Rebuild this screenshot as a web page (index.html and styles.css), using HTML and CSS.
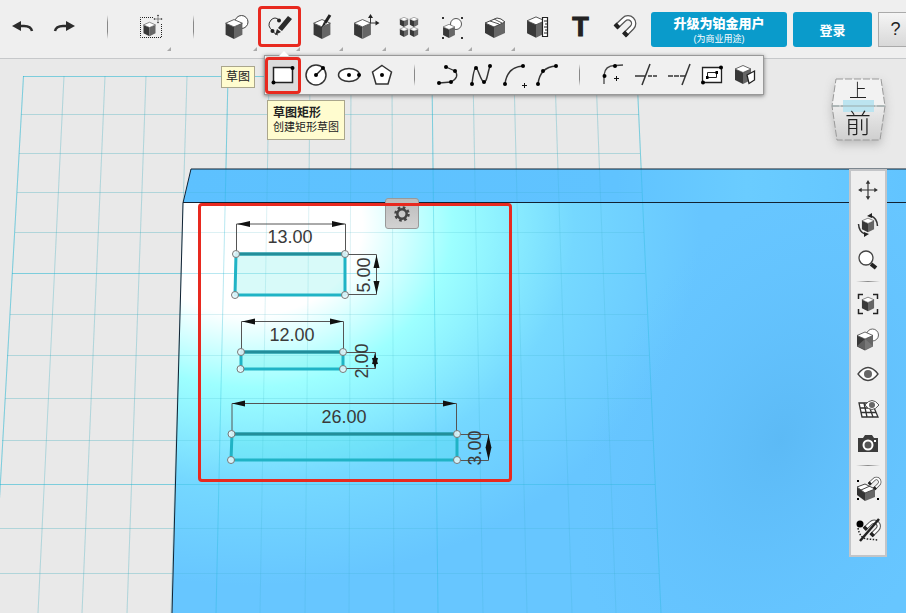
FILE: index.html
```html
<!DOCTYPE html>
<html lang="zh-CN">
<head>
<meta charset="utf-8">
<meta name="viewport" content="width=device-width, initial-scale=1">
<title>草图</title>
<link rel="stylesheet" href="styles.css">
</head>
<body>
<svg class="defs" aria-hidden="true">
  <defs>
    <g id="cube">
      <path d="M-8-5.500 0-2V9.500L-8 5.500Z" fill="#383838"/>
      <path d="M8-5.500 0-2V9.500L8 5.500Z" fill="#666"/>
      <path d="M0-9 8-5.500 0-2-8-5.500Z" fill="#fff" stroke="#444" stroke-width=".8"/>
    </g>
    <g id="move">
      <path d="M0-9V9M-9 0H9" stroke="#333" stroke-width="1.300"/>
      <path d="M0-11l2.500 4h-5zM0 11l2.500-4h-5zM-11 0l4-2.500v5zM11 0l-4-2.500v5z" fill="#333"/>
    </g>
    <g id="magnet">
      <path d="M-8 0 0-7.500A5.600 5.600 0 0 1 8 .5L.5 8" fill="none" stroke="#555" stroke-width="5.500"/>
      <path d="M-8 0 0-7.500A5.600 5.600 0 0 1 8 .5L.5 8" fill="none" stroke="#fff" stroke-width="3"/>
      <path d="M-8.500 .5-5.500-2.500M0 8.500 3 5.500" stroke="#222" stroke-width="5.500"/>
    </g>
    <g id="pencil"><path d="M9-11 13-8 3 4-1 1ZM-2 2 2 5-4 8Z" fill="#2c2c2c"/></g>
  </defs>
</svg>

<header class="topbar">
  <nav class="tools" aria-label="工具">
    <button class="tool" aria-label="撤销"><svg viewBox="-15 -15 30 30"><path d="M-10-1-1-6V4Z" fill="#2c2c2c"/><path d="M-3-1H2Q9-1 10 4" fill="none" stroke="#2c2c2c" stroke-width="2.500"/></svg></button>
    <button class="tool" aria-label="重做"><svg viewBox="-15 -15 30 30"><path d="M10-1 1-6V4Z" fill="#2c2c2c"/><path d="M3-1H-2Q-9-1-10 4" fill="none" stroke="#2c2c2c" stroke-width="2.500"/></svg></button>
    <span class="divider"></span>
    <button class="tool more" aria-label="变换"><svg viewBox="-15 -15 30 30"><path d="M2-9.500H-10.500V10.500H10.500V-4" fill="none" stroke="#222" stroke-dasharray="1 1"/><use href="#cube" transform="translate(-1.500 2)scale(.75)"/><use href="#move" transform="translate(7 -8)scale(.42)"/></svg></button>
    <span class="divider"></span>
    <button class="tool more" aria-label="基本体"><svg viewBox="-15 -15 30 30"><circle cx="4.500" cy="-5" r="6.500" fill="#fff" stroke="#444"/><use href="#cube" transform="translate(-3 2)scale(1.050)"/></svg></button>
    <button class="tool more marked" aria-label="草图"><svg viewBox="-15 -15 30 30"><path d="M-1-7Q-5-11-9-7-14-1-7 4-6 7-2 8" fill="none" stroke="#333"/><circle cx="-1" cy="-6.500" r="2" fill="#222"/><circle cx="-7.500" cy="4" r="2" fill="#222"/><use href="#pencil" transform="translate(-1 0)"/></svg></button>
    <button class="tool more" aria-label="构造"><svg viewBox="-15 -15 30 30"><use href="#cube" transform="translate(-1 2)scale(1.050)"/><path d="M7-12 2-4" stroke="#222" stroke-width="3"/><path d="M1-5 3-3-2 1Z" fill="#222"/></svg></button>
    <button class="tool more" aria-label="修改"><svg viewBox="-15 -15 30 30"><use href="#cube" transform="translate(-3.500 2)scale(1.050)"/><path d="M4.500-10V-4H11" fill="none" stroke="#333"/><path d="M4.500-13l2.500 4H2zM13.500-4l-4-2.500v5z" fill="#222"/></svg></button>
    <button class="tool more" aria-label="阵列"><svg viewBox="-15 -15 30 30"><use href="#cube" transform="translate(-5 -5)scale(.52)"/><use href="#cube" transform="translate(5 -5)scale(.52)"/><use href="#cube" transform="translate(-5 5)scale(.52)"/><use href="#cube" transform="translate(5 5)scale(.52)"/></svg></button>
    <button class="tool more" aria-label="分组"><svg viewBox="-15 -15 30 30"><path d="M-10-10h2v2h-2zM9-10h2v2H9zM-10 10h2v2h-2zM9 10h2v2H9z" fill="#333"/><circle cx="4" cy="-3" r="5.500" fill="#fff" stroke="#555"/><use href="#cube" transform="translate(-3 4)scale(.74)"/></svg></button>
    <button class="tool more" aria-label="合并"><svg viewBox="-15 -15 30 30"><path d="M-10-4-1 0V11L-10 6Z" fill="#383838"/><path d="M10-5-1 0V11L10 6Z" fill="#666"/><path d="M-10-4 2-9 6-8 10-5-1 0Z" fill="#fff" stroke="#444"/><path d="M-5-6 4-3M-1-8 7-4" stroke="#555"/></svg></button>
    <button class="tool" aria-label="测量"><svg viewBox="-15 -15 30 30"><use href="#cube" transform="translate(-2 0)scale(1.120)"/><path d="M4.500-9.500h5v19h-5z" fill="#fff" stroke="#222" stroke-width="1.200"/><path d="M6-6h3M7-3h2M6 0h3M7 3h2M6 6h3" stroke="#222"/></svg></button>
    <button class="tool" aria-label="文本"><span class="type-mark">T</span></button>
    <button class="tool" aria-label="吸附"><svg viewBox="-15 -15 30 30"><use href="#magnet"/></svg></button>
  </nav>
  <div class="account">
    <button class="primary upgrade"><strong>升级为铂金用户</strong><small>(为商业用途)</small></button>
    <button class="primary login">登录</button>
    <button class="help" aria-label="帮助">?</button>
  </div>
</header>

<main class="stage">
  <svg class="scene" viewBox="0 59 906 554" preserveAspectRatio="xMinYMin slice" role="img" aria-label="草图画布">
    <defs>
      <radialGradient id="shine" gradientUnits="userSpaceOnUse" cx="0" cy="0" r="450" gradientTransform="translate(250 225)scale(1 .8)">
        <stop offset="0" stop-color="#fff"/><stop offset=".25" stop-color="#fff"/><stop offset=".45" stop-color="#9dffff"/><stop offset=".54" stop-color="#90f3ff"/><stop offset=".72" stop-color="#75d8ff"/><stop offset="1" stop-color="#67c6ff"/>
      </radialGradient>
      <radialGradient id="shade" gradientUnits="userSpaceOnUse" cx="0" cy="0" r="230" gradientTransform="translate(780 440)rotate(25)scale(.8 1.200)">
        <stop offset="0" stop-color="#55b2ef" stop-opacity=".6"/><stop offset="1" stop-color="#60beff" stop-opacity="0"/>
      </radialGradient>
      <linearGradient id="back" x1="0" x2="1"><stop offset="0" stop-color="#5dc1ff"/><stop offset=".6" stop-color="#60c3ff"/><stop offset=".78" stop-color="#6accff"/><stop offset="1" stop-color="#62c4ff"/></linearGradient>
      <g id="grid">
        <path d="M64 76 38 613M105 76 82 613M146 76 127 613M187 76 171 613M269 76 260 613M310 76 305 613M351 76 349 613M392 76 394 613M473 76 483 613M514 76 527 613M555 76 572 613M596 76 616 613M21 114.500H639M19 153.500H640M17 192.500H642M15 232.500H644M10 314.500H647M7 355.500H649M5 398.500H651M2 440.500H653M0 528.500H657M0 573.500H659"/>
        <path class="major" d="M23.500 76-7 613M228 76 216 613M432 76 438 613M637 76 661 613M23 76.500H637M12 273.500H645M0 484.500H655"/>
      </g>
    </defs>
    <use class="grid" href="#grid"/>
    <path d="M191 169H906V203H183Z" fill="url(#back)"/>
    <path d="M183 203H906V613H172Z" fill="url(#shine)"/>
    <path d="M183 203H906V613H172Z" fill="url(#shade)"/>
    <use class="grid" href="#grid"/>
    <path d="M172 613 183 203 191 169H906M183 202.500H906" fill="none" stroke="#123"/>

    <g class="extension">
      <path d="M236.500 254V224H345.500V254M345 254.500H376.500V294.500H345"/>
      <path d="M241.500 352V321.500H343.500V352M343 352.500H375.500V368.500H343"/>
      <path d="M232 434V403.500H456.500V434M456 434.500H488.500V460.500H457"/>
    </g>
    <path d="M237 224l13-3v6zM345 224l-13-3v6zM242 321.500l13-3v6zM343 321.500l-13-3v6zM232 403.500l13-3v6zM456 403.500l-13-3v6zM376.500 255l3 13h-6zM376.500 294l3-13h-6zM375 353l3 11h-6zM375 369l-3-11h6zM488.500 435l3 13h-6zM488.500 460l-3-13h6z" fill="#111"/>
    <g class="profile">
      <path d="M236 254H345V295H235Z"/><path d="M241 352H343V369H241Z"/><path d="M232 434H457V460H231Z"/>
    </g>
    <path d="M236 254H345M241 352H343M232 434H457" stroke="#238e9a" stroke-width="3"/>
    <g class="nodes">
      <circle cx="236" cy="254" r="3.500"/><circle cx="345" cy="254" r="3.500"/><circle cx="235" cy="295" r="3.500"/><circle cx="345" cy="295" r="3.500"/>
      <circle cx="241" cy="352" r="3.500"/><circle cx="343" cy="352" r="3.500"/><circle cx="240.500" cy="369" r="3.500"/><circle cx="343" cy="369" r="3.500"/>
      <circle cx="231.500" cy="434" r="3.500"/><circle cx="457" cy="434" r="3.500"/><circle cx="231" cy="460" r="3.500"/><circle cx="457" cy="460" r="3.500"/>
    </g>
    <g class="dimension">
      <text x="290" y="243">13.00</text><text x="292" y="341">12.00</text><text x="344" y="423">26.00</text>
      <text transform="translate(370 275)rotate(-90)">5.00</text><text transform="translate(368 361)rotate(-90)">2.00</text><text transform="translate(481 448)rotate(-90)">3.00</text>
    </g>
  </svg>

  <button class="gear" aria-label="设置"><svg viewBox="-10 -10 20 20"><circle r="6.500" fill="none" stroke="#444" stroke-width="2.500" stroke-dasharray="2.600 2.500"/><circle r="4.700" fill="none" stroke="#444" stroke-width="2.500"/></svg></button>
  <div class="callout"></div>

  <div class="flyout" role="toolbar" aria-label="草图工具">
    <button class="sub marked" aria-label="草图矩形"><svg viewBox="-15 -15 30 30"><path d="M-9.500-7.500H9.500V7.500H-9.500Z" fill="#fff" stroke="#222" stroke-width="1.500"/><circle cx="9.500" cy="-7" r="2"/><circle cx="-9.500" cy="7.500" r="2"/></svg></button>
    <button class="sub" aria-label="圆"><svg viewBox="-15 -15 30 30"><circle r="10" fill="#fff" stroke="#333" stroke-width="1.500"/><path d="M0 0 7-7" stroke="#222" stroke-width="1.500"/><circle r="2"/><circle cx="7" cy="-7" r="2"/></svg></button>
    <button class="sub" aria-label="椭圆"><svg viewBox="-15 -15 30 30"><ellipse rx="10.500" ry="6.500" fill="#fff" stroke="#333" stroke-width="1.500"/><circle r="2"/><circle cx="10" r="2"/></svg></button>
    <button class="sub" aria-label="多边形"><svg viewBox="-15 -15 30 30"><path d="M0-9.500 9.500-3 6 9H-6L-9.500-3Z" fill="#fff" stroke="#333" stroke-width="1.500"/><circle r="2"/></svg></button>
    <span class="divider"></span>
    <button class="sub" aria-label="多段线"><svg viewBox="-15 -15 30 30"><path d="M-2-8 7-4Q12 2 3 7L-9 8" fill="none" stroke="#333" stroke-width="1.300"/><circle cx="-2" cy="-8" r="2"/><circle cx="7" cy="-4" r="2"/><circle cx="3" cy="7" r="2"/><circle cx="-9" cy="8" r="2"/></svg></button>
    <button class="sub" aria-label="样条"><svg viewBox="-15 -15 30 30"><path d="M-9 9C-8 0-7-7-5-7S0 7 3 7 6 0 9-9" fill="none" stroke="#333" stroke-width="1.500"/><circle cx="-9" cy="9" r="2"/><circle cx="-5" cy="-7" r="2"/><circle cx="3" cy="7" r="2"/><circle cx="9" cy="-9" r="2"/></svg></button>
    <button class="sub" aria-label="两点圆弧"><svg viewBox="-15 -15 30 30"><path d="M-9 9Q-7-8 9-9" fill="none" stroke="#333" stroke-width="1.500"/><circle cx="-9" cy="9" r="2"/><circle cx="9" cy="-9" r="2"/><path d="M8 10.500h5M10.500 8v5" stroke="#111"/></svg></button>
    <button class="sub" aria-label="三点圆弧"><svg viewBox="-15 -15 30 30"><path d="M-9 9Q-7-8 9-9" fill="none" stroke="#333" stroke-width="1.500"/><circle cx="-9" cy="9" r="2"/><circle cx="-4" cy="-4" r="2"/><circle cx="9" cy="-9" r="2"/></svg></button>
    <span class="divider"></span>
    <button class="sub" aria-label="圆角"><svg viewBox="-15 -15 30 30"><path d="M-9 9V0Q-8-10 3-9.500L10-10" fill="none" stroke="#444" stroke-width="1.300"/><circle cx="-8.500" cy="1" r="2"/><circle cx="2" cy="-9" r="2"/><path d="M1 3.500h5M3.500 1v5" stroke="#111"/></svg></button>
    <button class="sub" aria-label="修剪"><svg viewBox="-15 -15 30 30"><path d="M-11 1H0M4-11-4 10" stroke="#333" stroke-width="1.500"/><path d="M2 1H12" stroke="#333" stroke-width="1.500" stroke-dasharray="4 1"/></svg></button>
    <button class="sub" aria-label="延伸"><svg viewBox="-15 -15 30 30"><path d="M-11 1H6" stroke="#333" stroke-width="1.500" stroke-dasharray="5 1"/><path d="M11-11 3 10" stroke="#333" stroke-width="1.500"/></svg></button>
    <button class="sub" aria-label="偏移"><svg viewBox="-15 -15 30 30"><path d="M-9.500-7.500H9.500V7.500H-9.500Z" fill="#fff" stroke="#222" stroke-width="1.300"/><path d="M-4.500-2.500H4.500V2.500H-4.500Z" fill="none" stroke="#222"/><path d="M3.500-4h2.500v3H3.500zM-6 1h2.500v3H-6z"/><circle cx="9" cy="-7.500" r="2"/><circle cx="-9" cy="7.500" r="2"/></svg></button>
    <button class="sub" aria-label="投影"><svg viewBox="-15 -15 30 30"><use href="#cube" transform="translate(-2 -.5)"/><path d="M2 0 9.500-4V5L4 8.500Z" fill="#fff" stroke="#222" stroke-width="1.300"/></svg></button>
  </div>
  <div class="tip tip-name" role="tooltip">草图</div>
  <div class="tip tip-detail" role="tooltip"><strong>草图矩形</strong><span>创建矩形草图</span></div>

  <div class="viewcube" role="img" aria-label="视图立方体">
    <svg viewBox="0 0 58 70">
      <defs><linearGradient id="face" x2="0" y2="1"><stop offset="0" stop-color="#ececec"/><stop offset="1" stop-color="#cfcfcf"/></linearGradient></defs>
      <path d="M6 3H51L55 30H2Z" fill="#f2f2f2"/><path d="M2 30H55L50 64H7Z" fill="url(#face)"/>
      <path d="M6 3H51L55 30 50 64H7L2 30ZM2 30H55" fill="none" stroke="#999" stroke-dasharray="7 2"/>
      <path d="M13 24H44V36H13Z" fill="#bce4f0"/><path d="M2 30H55" stroke="#9aa"/>
      <text x="28" y="21" font-size="18">上</text><text x="28" y="57" font-size="26">前</text>
    </svg>
  </div>

  <aside class="viewbar" role="toolbar" aria-label="视图">
    <button class="view" aria-label="平移"><svg viewBox="-15 -15 30 30"><use href="#move" transform="scale(.9)"/></svg></button>
    <button class="view" aria-label="旋转"><svg viewBox="-15 -15 30 30"><use href="#cube" transform="scale(.76)"/><path d="M3-9Q9-7 9.500 1M-3 9Q-9 7-9.500-1" fill="none" stroke="#333" stroke-width="1.500"/><path d="M-1-9 4-12V-7ZM1 9-4 7V12Z" fill="#222"/></svg></button>
    <button class="view" aria-label="缩放"><svg viewBox="-15 -15 30 30"><circle cx="-2" cy="-2" r="7" fill="#fff" stroke="#444" stroke-width="1.300"/><path d="M3 4 8 8" stroke="#222" stroke-width="4"/></svg></button>
    <span class="rule"></span>
    <button class="view" aria-label="适应"><svg viewBox="-15 -15 30 30"><use href="#cube" transform="scale(.76)"/><path d="M-9.500-5V-9.500H-5M5-9.500H9.500V-5M9.500 5V9.500H5M-5 9.500H-9.500V5" fill="none" stroke="#222" stroke-width="1.500"/></svg></button>
    <button class="view" aria-label="材质"><svg viewBox="-15 -15 30 30"><circle cx="4.500" cy="-4" r="6" fill="#fff" stroke="#666"/><use href="#cube" transform="translate(-3 2)"/><path d="M-3 0-11 7-3 11 5 7Z" fill="#888" opacity=".5"/></svg></button>
    <button class="view" aria-label="可见性"><svg viewBox="-15 -15 30 30"><path d="M-10 0Q0-13 10 0 0 13-10 0Z" fill="#fff" stroke="#444" stroke-width="1.300"/><circle r="4" fill="#666"/></svg></button>
    <button class="view" aria-label="网格"><svg viewBox="-15 -15 30 30"><path d="M-9-6H4L10 8H-6Z" fill="#fff" stroke="#333" stroke-width="1.300"/><path d="M-8-1H7M-7 3.500H8M-4-6-1 8M0-6 5 8" stroke="#333" stroke-width="1.300"/><path d="M-3-4Q4-13 11-4 4 5-3-4Z" fill="#fff" stroke="#555"/><circle cx="4" cy="-4" r="3" fill="#666"/></svg></button>
    <button class="view" aria-label="截图"><svg viewBox="-15 -15 30 30"><path d="M-10-6H-5L-3-9H4L6-6H10V8H-10Z" fill="#3c3c3c"/><circle cy="1" r="4.500" fill="#555" stroke="#fff" stroke-width="2"/><path d="M6-4h2v2H6z" fill="#fff"/></svg></button>
    <span class="rule"></span>
    <button class="view tall" aria-label="组合吸附"><svg viewBox="-15 -15 30 30"><path d="M-11-10h2v2h-2zM-11 8h2v2h-2zM9 8h2v2H9z"/><path d="M-11-3-3 3V11L-11 5Z" fill="#333"/><path d="M-3 3 7-1V7L-3 11Z" fill="#666"/><path d="M-11-3-3-6 7-1-3 3ZM-7 0 2-4" fill="#fff" stroke="#444"/><use href="#magnet" transform="translate(6 -6)scale(.6)"/></svg></button>
    <button class="view tall" aria-label="禁用吸附"><svg viewBox="-15 -15 30 30"><circle cx="-8" cy="-6" r="3.500"/><path d="M-10-2Q-8 9 0 9L10 10" fill="none" stroke="#222" stroke-width="1.500" stroke-dasharray="1.500 1.500"/><use href="#magnet" transform="translate(3 -1)scale(.8)"/><path d="M-8 11 11-11" stroke="#222" stroke-width="2.500"/></svg></button>
  </aside>
</main>
</body>
</html>
```
FILE: styles.css
```css
* { box-sizing: border-box; }

body {
  display: flex;
  flex-direction: column;
  min-height: 100vh;
  margin: 0;
  overflow: hidden;
  background: #e9e9e9;
  color: #222;
  font-family: "Liberation Sans", "Noto Sans CJK SC", sans-serif;
}

button {
  padding: 0;
  border: 0;
  background: none;
  color: inherit;
  font: inherit;
}

.defs { position: absolute; width: 0; height: 0; }

.topbar {
  display: flex;
  height: 59px;
  border-bottom: 1px solid #c6c8ca;
  background: #efefef;
}

.tools { display: flex; flex: none; }

.tool {
  position: relative;
  display: grid;
  place-items: center;
  width: 43px;
  height: 54px;
}

.tool svg, .sub svg, .view svg { display: block; width: 30px; height: 30px; }

.more::after {
  content: "";
  position: absolute;
  right: 1px;
  bottom: 3px;
  border: 2px solid;
  border-color: transparent #aaa #aaa transparent;
}

.tool.marked::before, .sub.marked::before {
  content: "";
  position: absolute;
  inset: 6px 0 7px 0;
  border: 3px solid #e8291f;
  border-radius: 4px;
}

.divider {
  flex: none;
  width: 1px;
  height: 24px;
  margin: 15px 21px;
  background: linear-gradient(transparent, #888 30%, #888 70%, transparent);
}

.type-mark {
  font-size: 27px;
  font-weight: 700;
  line-height: 30px;
  -webkit-text-stroke: 1px #222;
}

.account {
  display: flex;
  flex: 1;
  gap: 6px;
  padding: 12px 0 11px 6px;
}

.primary {
  flex: none;
  border-radius: 3px;
  background: #0a9bcb;
  color: #fff;
  font-size: 13px;
  font-weight: 700;
}

.upgrade {
  display: flex;
  flex-direction: column;
  align-items: center;
  justify-content: center;
  width: 136px;
}

.upgrade strong { line-height: 18px; }
.upgrade small { font-size: 9px; font-weight: 400; line-height: 12px; }
.login { width: 79px; }

.help {
  flex: none;
  width: 35px;
  border: 1px solid #aaa;
  background: linear-gradient(#f5f5f5, #d8d8d8);
  font-size: 18px;
}

.stage { position: relative; flex: 1; }

.scene { position: absolute; inset: 0; display: block; width: 100%; height: 100%; }
.grid { fill: none; stroke: #2aa9bd; stroke-opacity: .16; stroke-width: 1; }
.major { stroke: #16b4d0; stroke-opacity: .3; }
.extension { fill: none; stroke: #555; }
.profile { fill: #3ee5df; fill-opacity: .2; stroke: #20b3c5; stroke-width: 3; }
.nodes { fill: #eefcff; fill-opacity: .85; stroke: #777; }
.dimension { fill: #3a3a3a; font-size: 18px; text-anchor: middle; }

.gear {
  position: absolute;
  top: 139px;
  left: 385px;
  display: grid;
  place-items: center;
  width: 34px;
  height: 31px;
  border: 1px solid #999;
  border-radius: 3px;
  background: linear-gradient(#bbb, #d2d2d2);
}

.gear svg { width: 20px; height: 20px; }

.callout {
  position: absolute;
  top: 144px;
  left: 198px;
  width: 314px;
  height: 279px;
  border: 3px solid #e8291f;
  border-radius: 4px;
  pointer-events: none;
}

.flyout {
  position: absolute;
  top: -4px;
  left: 264px;
  display: flex;
  padding: 0 2px 0 1px;
  border: 1px solid #999;
  background: #f0f0f0;
  box-shadow: 0 1px 4px #777;
}

.flyout::before {
  content: "";
  position: absolute;
  top: -5px;
  left: 14px;
  border: 5px solid transparent;
  border-top: 0;
  border-bottom-color: #fff;
}

.sub {
  position: relative;
  display: grid;
  place-items: center;
  width: 33px;
  height: 38px;
}

.sub.marked { background: #dcdcdc; }
.sub.marked::before { inset: 1px -2px 0 -1px; }
.flyout .divider { height: 22px; margin: 8px 16px; }

.tip {
  position: absolute;
  border: 1px solid #aaa68c;
  background: #fffccf;
  font-size: 12px;
  line-height: 14px;
}

.tip-name { top: 7px; left: 221px; padding: 3px 4px; }
.tip-detail { top: 41px; left: 267px; display: grid; padding: 5px; }
.tip-detail span { font-size: 11px; }

.viewcube { position: absolute; top: 17px; right: 18px; filter: drop-shadow(0 4px 5px #bbb); }
.viewcube svg { display: block; width: 58px; height: 70px; overflow: visible; }
.viewcube text { fill: #222; font-family: "Noto Sans CJK SC", sans-serif; font-weight: 300; text-anchor: middle; }

.viewbar {
  position: absolute;
  top: 110px;
  right: 19px;
  display: flex;
  flex-direction: column;
  align-items: center;
  width: 38px;
  padding: 1px 0 5px;
  border: 2px solid #c3c5c8;
  background: #efefef;
}

.view { display: grid; place-items: center; width: 34px; height: 35px; }
.view.tall { height: 40px; }

.rule {
  width: 24px;
  height: 1px;
  margin: 4px 0;
  background: linear-gradient(90deg, transparent, #888, transparent);
}
```
